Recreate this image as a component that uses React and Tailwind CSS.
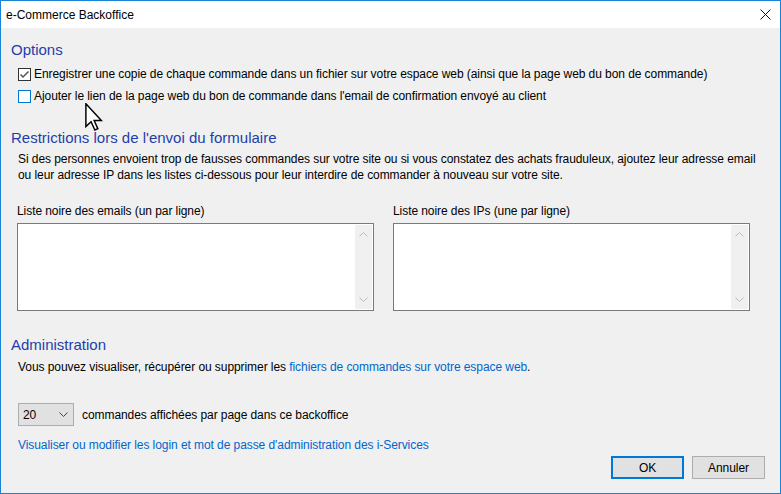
import React from "react";

const font = { fontFamily: '"Liberation Sans", Arial, sans-serif' };

// Small chevron used in the scrollbars and the select
const Chevron = ({ up, className }) => (
  <svg width="9" height="6" viewBox="0 0 9 6" className={className}>
    <path
      d={up ? "M0.5 5.5 L4.5 1.5 L8.5 5.5" : "M0.5 0.5 L4.5 4.5 L8.5 0.5"}
      fill="none"
      stroke="currentColor"
      strokeWidth="1"
    />
  </svg>
);

const Checkbox = ({ checked, hover }) => (
  <span
    className={
      "w-[13px] h-[13px] shrink-0 bg-white border flex items-center justify-center " +
      (hover ? "border-[#0078d7]" : "border-[#333333]")
    }
  >
    {checked && (
      <svg width="11" height="11" viewBox="0 0 11 11">
        <path d="M1.5 5.5 L4 8 L9.5 2.5" fill="none" stroke="#555555" strokeWidth="1.5" />
      </svg>
    )}
  </span>
);

const Heading = ({ children }) => (
  <div className="pl-[10px] text-[15px] leading-[20px] tracking-normal text-[#1f3eaa]">{children}</div>
);

// Multi-line edit box with a disabled vertical scrollbar
const ListBox = ({ label }) => (
  <div className="flex flex-col w-[357px]">
    <div className="h-[16px] leading-[16px]">{label}</div>
    <div className="mt-[4px] h-[88px] border border-[#7a7a7a] bg-white flex justify-end p-px">
      <div className="w-[17px] h-full bg-[#f0f0f0] flex flex-col items-center justify-between py-[6px] text-[#bdbdbd]">
        <Chevron up />
        <Chevron />
      </div>
    </div>
  </div>
);

const Cursor = () => (
  <svg
    className="absolute left-[84px] top-[102px]"
    width="18"
    height="28"
    viewBox="0 0 12 19"
  >
    <path
      d="M0.5 0.5 L0.5 16 L4 12.7 L6.6 18.3 L8.6 17.4 L6.1 11.9 L11 11.9 Z"
      fill="#ffffff"
      stroke="#000000"
      strokeWidth="1"
      strokeLinejoin="miter"
    />
  </svg>
);

export default function App() {
  return (
    <div
      className="relative w-[781px] h-[494px] border border-[#1883d7] bg-[#f0f0f0] flex flex-col text-[12px] tracking-[-0.07px] text-black overflow-hidden"
      style={font}
    >
      {/* Title bar */}
      <div className="h-[27px] bg-white flex items-center justify-between pl-[5px] pr-[9px] shrink-0">
        <span className="tracking-normal">e-Commerce Backoffice</span>
        <svg width="11" height="11" viewBox="0 0 11 11">
          <path d="M0.5 0.5 L10.5 10.5 M10.5 0.5 L0.5 10.5" stroke="#111" strokeWidth="1" />
        </svg>
      </div>

      <div className="flex flex-col pt-[12px]">
        <Heading>Options</Heading>
        <div className="mt-[3px] pl-[17px] flex flex-col">
          <label className="h-[22px] flex items-center gap-[3px]">
            <Checkbox checked />
            <span>Enregistrer une copie de chaque commande dans un fichier sur votre espace web (ainsi que la page web du bon de commande)</span>
          </label>
          <label className="h-[22px] flex items-center gap-[3px]">
            <Checkbox hover />
            <span>Ajouter le lien de la page web du bon de commande dans l'email de confirmation envoyé au client</span>
          </label>
        </div>

        <div className="mt-[21px]">
          <Heading>Restrictions lors de l'envoi du formulaire</Heading>
        </div>
        <div className="mt-[3px] pl-[17px] leading-[16px]">
          <p>Si des personnes envoient trop de fausses commandes sur votre site ou si vous constatez des achats frauduleux, ajoutez leur adresse email</p>
          <p>ou leur adresse IP dans les listes ci-dessous pour leur interdire de commander à nouveau sur votre site.</p>
        </div>

        <div className="mt-[20px] pl-[16px] flex gap-[19px]">
          <ListBox label="Liste noire des emails (un par ligne)" />
          <ListBox label="Liste noire des IPs (une par ligne)" />
        </div>

        <div className="mt-[24px]">
          <Heading>Administration</Heading>
        </div>
        <div className="mt-[4px] pl-[17px] leading-[16px]">
          Vous pouvez visualiser, récupérer ou supprimer les{" "}
          <span className="text-[#0066cc]">fichiers de commandes sur votre espace web</span>.
        </div>

        <div className="mt-[28px] pl-[17px] flex items-center gap-[8px]">
          <div className="w-[56px] h-[23px] border border-[#adadad] bg-[#e1e1e1] flex items-center justify-between pl-[4px] pr-[5px]">
            <span>20</span>
            <Chevron className="text-[#444]" />
          </div>
          <span>commandes affichées par page dans ce backoffice</span>
        </div>

        <div className="mt-[11px] pl-[17px] leading-[16px] text-[#0066cc]">
          Visualiser ou modifier les login et mot de passe d'administration des i-Services
        </div>

        <div className="mt-[3px] pr-[15px] flex justify-end gap-[8px]">
          <button className="w-[73px] h-[23px] border-2 border-[#0078d7] bg-[#e1e1e1]">OK</button>
          <button className="w-[73px] h-[23px] border border-[#adadad] bg-[#e1e1e1]">Annuler</button>
        </div>
      </div>

      <Cursor />
    </div>
  );
}
